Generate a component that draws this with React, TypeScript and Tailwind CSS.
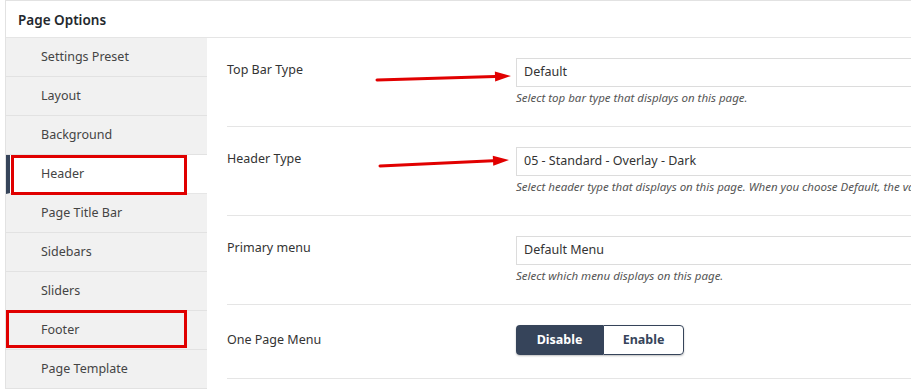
const menu = [
  "Settings Preset",
  "Layout",
  "Background",
  "Header",
  "Page Title Bar",
  "Sidebars",
  "Sliders",
  "Footer",
  "Page Template",
];

function Arrow({ x1, y1, x2, y2 }: { x1: number; y1: number; x2: number; y2: number }) {
  const ang = Math.atan2(y2 - y1, x2 - x1);
  const len = 16;
  const half = 5;
  const bx = x2 - len * Math.cos(ang);
  const by = y2 - len * Math.sin(ang);
  const px = -Math.sin(ang) * half;
  const py = Math.cos(ang) * half;
  return (
    <g>
      <line x1={x1} y1={y1} x2={bx} y2={by} stroke="#e10000" strokeWidth={3} strokeLinecap="round" />
      <polygon points={`${x2},${y2} ${bx + px},${by + py} ${bx - px},${by - py}`} fill="#e10000" />
    </g>
  );
}

function Field({ value, desc }: { value: string; desc: string }) {
  return (
    <div className="shrink-0">
      <div className="w-[520px] h-[29px] border border-[#dcdcdc] bg-white pl-[7px] flex items-center text-[12.5px] text-[#333]">
        {value}
      </div>
      <p className="mt-[4px] h-[14px] leading-[14px] text-[11.5px] italic text-[#555] whitespace-nowrap">{desc}</p>
    </div>
  );
}

export default function App() {
  return (
    <div
      className="relative w-[911px] h-[390px] overflow-hidden bg-white"
      style={{ fontFamily: '"Noto Sans", "Open Sans", sans-serif' }}
    >
      <div className="ml-[5px] w-[1000px] border-t border-l border-[#e2e2e2]">
        {/* title */}
        <div className="h-[37px] border-b border-[#e5e5e5] pl-[12px] pt-[2px] flex items-center text-[13.5px] font-semibold text-[#23282d]">
          Page Options
        </div>

        <div className="flex">
          {/* side tabs */}
          <ul className="w-[201px] shrink-0 bg-[#f1f1f1]">
            {menu.map((m) => {
              const active = m === "Header";
              return (
                <li
                  key={m}
                  className={
                    active
                      ? "h-[39px] border-b border-[#e6e6e6] bg-white border-l-[4px] border-l-[#36445a] pl-[31px] pt-[1px] flex items-center text-[12.5px] text-[#444]"
                      : "h-[39px] border-b border-[#e2e2e2] pl-[35px] pt-[1px] flex items-center text-[12.5px] text-[#444]"
                  }
                >
                  {m}
                </li>
              );
            })}
          </ul>

          {/* options */}
          <div className="flex-1 pl-[20px]">
            <div className="flex border-b border-[#e5e5e5] pt-[20px] pb-[21px]">
              <div className="w-[289px] shrink-0 pt-[3px] text-[12.5px] text-[#333]">Top Bar Type</div>
              <Field value="Default" desc="Select top bar type that displays on this page." />
            </div>
            <div className="flex border-b border-[#e5e5e5] pt-[20px] pb-[21px]">
              <div className="w-[289px] shrink-0 pt-[3px] text-[12.5px] text-[#333]">Header Type</div>
              <Field
                value="05 - Standard - Overlay - Dark"
                desc="Select header type that displays on this page. When you choose Default, the value in Theme Options will be used."
              />
            </div>
            <div className="flex border-b border-[#e5e5e5] pt-[20px] pb-[21px]">
              <div className="w-[289px] shrink-0 pt-[3px] text-[12.5px] text-[#333]">Primary menu</div>
              <Field value="Default Menu" desc="Select which menu displays on this page." />
            </div>
            <div className="flex border-b border-[#e5e5e5] pt-[20px] pb-[23px]">
              <div className="w-[289px] shrink-0 pt-[6px] text-[12.5px] text-[#333]">One Page Menu</div>
              <div className="flex h-[30px] rounded-[4px] shadow-[0_1px_2px_rgba(0,0,0,0.25)]">
                <button className="w-[87px] rounded-l-[4px] bg-[#36445a] text-white text-[12.5px] font-bold">
                  Disable
                </button>
                <button className="w-[81px] rounded-r-[4px] border border-[#36445a] bg-white text-[#36445a] text-[12.5px] font-bold">
                  Enable
                </button>
              </div>
            </div>
          </div>
        </div>
      </div>

      {/* annotations */}
      <div className="absolute left-[11px] top-[155px] w-[176px] h-[40px] border-[3px] border-[#e00000]" />
      <div className="absolute left-[6px] top-[310px] w-[181px] h-[38px] border-[3px] border-[#e00000]" />
      <svg className="absolute left-0 top-0 pointer-events-none" width="911" height="390">
        <Arrow x1={377} y1={80} x2={511} y2={76} />
        <Arrow x1={380} y1={166} x2={509} y2={160} />
      </svg>
    </div>
  );
}
